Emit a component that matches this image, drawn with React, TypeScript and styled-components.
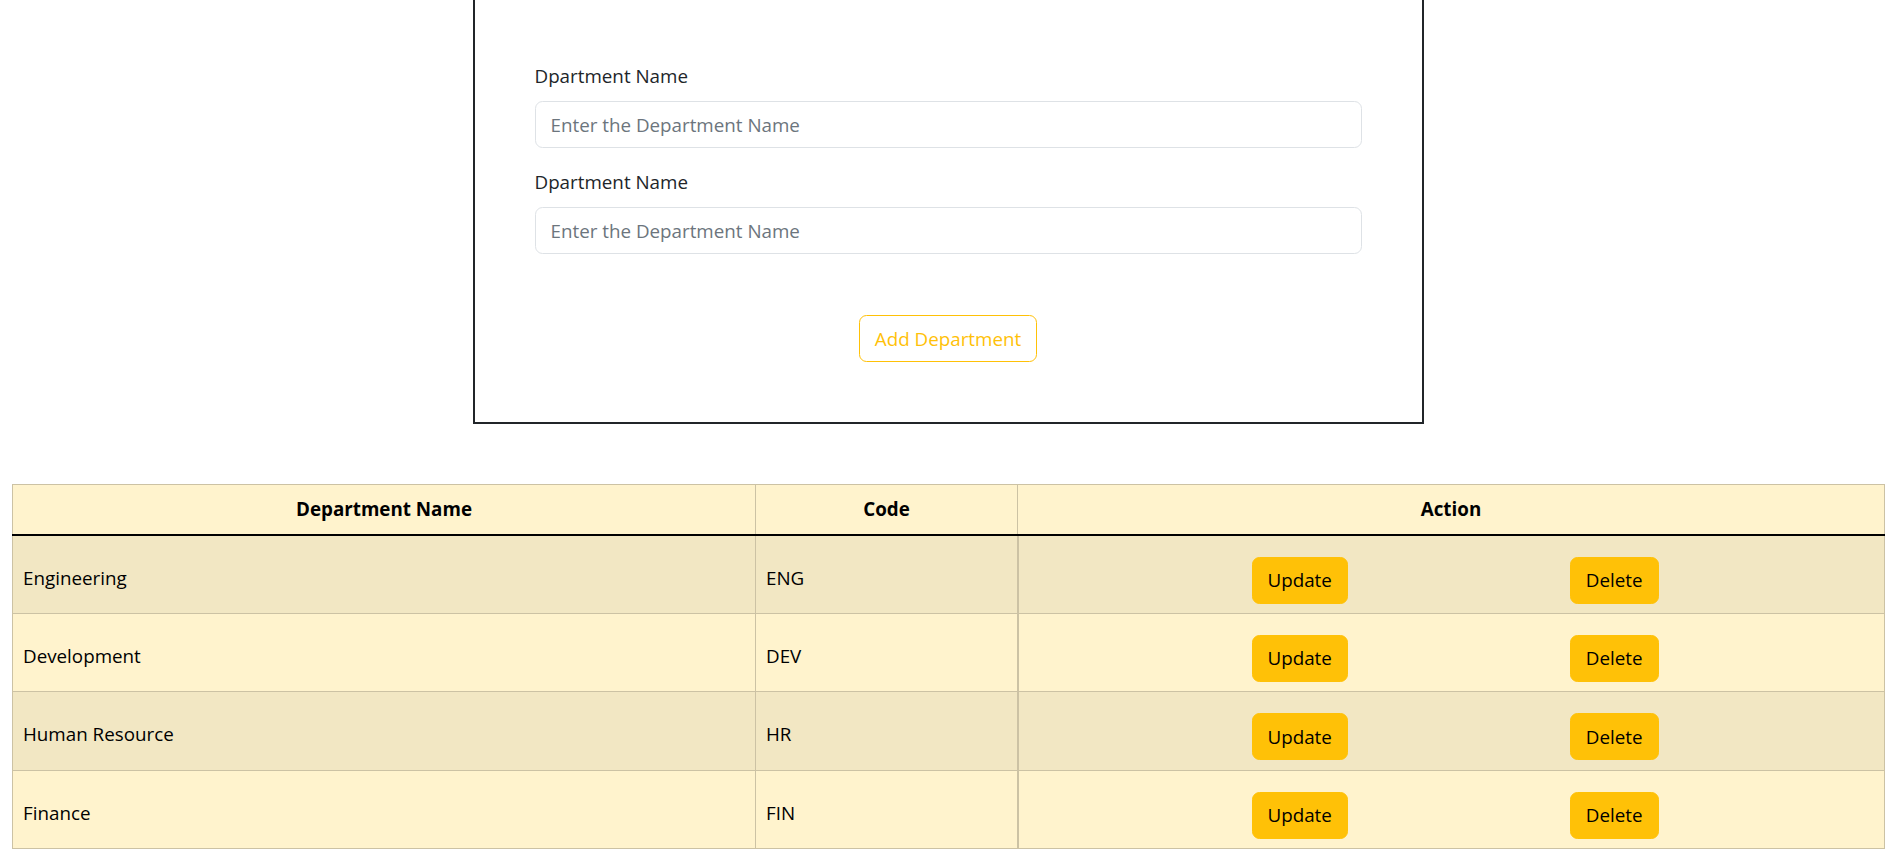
import styled, { createGlobalStyle } from "styled-components";

const GlobalStyle = createGlobalStyle`
  html, body {
    margin: 0;
    background: #ffffff;
  }
  body {
    font-family: "Open Sans", "Noto Sans", sans-serif;
    font-size: 18.8px;
    line-height: 30px;
    color: #212529;
  }
  * {
    box-sizing: border-box;
  }
`;

const Page = styled.div`
  padding: 0 13px 40px 12px;
`;

const FormCard = styled.form`
  width: 951px;
  margin: -3px auto 0;
  border: 2px solid #212529;
  padding: 62px 60px 60px;
`;

const Field = styled.div`
  margin-bottom: 19px;
`;

const Label = styled.label`
  display: block;
  margin-bottom: 10px;
  color: #212529;
`;

const Input = styled.input`
  display: block;
  width: 100%;
  height: 47px;
  padding: 7.5px 15px;
  font: inherit;
  color: #212529;
  background: #fff;
  border: 1px solid #dee2e6;
  border-radius: 7.5px;
  outline: none;

  &::placeholder {
    color: #6c757d;
  }
`;

const Actions = styled.div`
  display: flex;
  justify-content: center;
  margin-top: 61px;
`;

const OutlineButton = styled.button`
  font: inherit;
  line-height: 30px;
  padding: 7.5px 15px;
  color: #ffc107;
  background: transparent;
  border: 1px solid #ffc107;
  border-radius: 7.5px;
  cursor: pointer;
`;

const TableWrap = styled.div`
  margin-top: 60px;
`;

const Table = styled.table`
  width: 100%;
  table-layout: fixed;
  border-collapse: collapse;
  color: #000;
  border: 1px solid #ccc2a4;
`;

const HeadCell = styled.th<{ $w: number }>`
  width: ${(p) => p.$w}px;
  height: 50px;
  padding: 8px 10px;
  font-weight: 700;
  text-align: center;
  background: #fff3cd;
  border: 1px solid #ccc2a4;
  border-bottom: 2.5px solid #000;
`;

const Row = styled.tr<{ $striped: boolean }>`
  height: 78.5px;
  background: ${(p) => (p.$striped ? "#f2e7c3" : "#fff3cd")};
`;

const Cell = styled.td<{ $action?: boolean }>`
  padding: ${(p) => (p.$action ? "21px 10px 9px" : "15px 10px 8px")};
  vertical-align: middle;
  border: 1px solid #ccc2a4;
  border-left-width: ${(p) => (p.$action ? "2px" : "1px")};
`;

const ActionGroup = styled.div`
  display: flex;
  align-items: center;
  gap: 222px;
  padding-left: 223px;
`;

const WarnButton = styled.button`
  font: inherit;
  line-height: 30px;
  padding: 7.5px 15px;
  color: #000;
  background: #ffc107;
  border: 1px solid #ffc107;
  border-radius: 7.5px;
  cursor: pointer;
`;

const departments = [
  { name: "Engineering", code: "ENG" },
  { name: "Development", code: "DEV" },
  { name: "Human Resource", code: "HR" },
  { name: "Finance", code: "FIN" },
];

export default function App() {
  return (
    <Page>
      <GlobalStyle />
      <FormCard onSubmit={(e) => e.preventDefault()}>
        <Field>
          <Label htmlFor="dept-name">Dpartment Name</Label>
          <Input id="dept-name" placeholder="Enter the Department Name" />
        </Field>
        <Field>
          <Label htmlFor="dept-code">Dpartment Name</Label>
          <Input id="dept-code" placeholder="Enter the Department Name" />
        </Field>
        <Actions>
          <OutlineButton type="submit">Add Department</OutlineButton>
        </Actions>
      </FormCard>

      <TableWrap>
        <Table>
          <thead>
            <tr>
              <HeadCell $w={743}>Department Name</HeadCell>
              <HeadCell $w={262}>Code</HeadCell>
              <HeadCell $w={867}>Action</HeadCell>
            </tr>
          </thead>
          <tbody>
            {departments.map((d, i) => (
              <Row key={d.code} $striped={i % 2 === 0}>
                <Cell>{d.name}</Cell>
                <Cell>{d.code}</Cell>
                <Cell $action>
                  <ActionGroup>
                    <WarnButton>Update</WarnButton>
                    <WarnButton>Delete</WarnButton>
                  </ActionGroup>
                </Cell>
              </Row>
            ))}
          </tbody>
        </Table>
      </TableWrap>
    </Page>
  );
}
